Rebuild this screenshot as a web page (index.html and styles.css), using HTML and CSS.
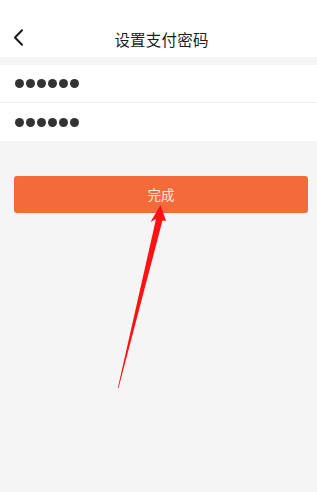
FILE: index.html
```html
<!DOCTYPE html>
<html lang="zh-CN">
<head>
  <meta charset="UTF-8" />
  <meta name="viewport" content="width=device-width, initial-scale=1.0" />
  <title>设置支付密码</title>
  <link rel="stylesheet" href="styles.css">
</head>
<body>
  <div class="page">
    <div class="topbar">
      <span class="back">
        <svg width="11" height="17" viewBox="0 0 11 17">
          <path d="M9 1.2 L2 8.5 L9 15.8" fill="none" stroke="#1a1a1a" stroke-width="2" stroke-linecap="round" stroke-linejoin="round"/>
        </svg>
      </span>
      <h1>设置支付密码</h1>
    </div>

    <div class="form">
      <div class="field">
        <span class="dot"></span><span class="dot"></span><span class="dot"></span>
        <span class="dot"></span><span class="dot"></span><span class="dot"></span>
      </div>
      <div class="field">
        <span class="dot"></span><span class="dot"></span><span class="dot"></span>
        <span class="dot"></span><span class="dot"></span><span class="dot"></span>
      </div>
    </div>

    <button class="done">完成</button>

    <!-- annotation arrow drawn over the screenshot -->
    <svg class="arrow" width="317" height="492" viewBox="0 0 317 492">
      <path d="M160.5 205 L166 221 L162.5 220.5 L118.5 388 L117.8 388 L156 219 L150.5 222 Z" fill="#ff1212"/>
    </svg>
  </div>
</body>
</html>
```

FILE: styles.css
```css
body {
  margin: 0;
  font-family: "Noto Sans CJK SC", "Noto Sans", sans-serif;
  background-color: #f5f5f5;
}
.page {
  position: relative;
  min-height: 492px;
}
.topbar {
  height: 57px;
  background-color: #fff;
  display: flex;
  align-items: center;
  justify-content: center;
  position: relative;
}
.back {
  position: absolute;
  left: 13px;
  top: 29px;
  line-height: 0;
}
h1 {
  margin: 0;
  padding-left: 6px;
  padding-top: 20px;
  font-size: 15.5px;
  font-weight: 400;
  color: #1e1e1e;
  letter-spacing: 0.2px;
}
.form {
  margin-top: 8px;
  background-color: #fff;
}
.field {
  height: 37px;
  display: flex;
  align-items: center;
  gap: 2px;
  padding-left: 15px;
}
.field + .field {
  height: 38px;
  border-top: 1px solid #ececec;
}
.dot {
  width: 9px;
  height: 9px;
  border-radius: 50%;
  background-color: #333;
}
.done {
  display: block;
  margin: 35px 9px 0 14px;
  width: 294px;
  height: 37px;
  border: none;
  border-radius: 3px;
  background-color: #f36b3b;
  color: #fde9df;
  font-family: inherit;
  font-size: 13.5px;
  padding: 0 0 2px 0;
}
.arrow {
  position: absolute;
  left: 0;
  top: 0;
  pointer-events: none;
}
```
